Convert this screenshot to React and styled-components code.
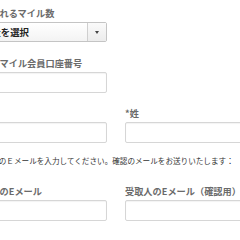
import React from 'react'
import styled, { createGlobalStyle } from 'styled-components'

const Global = createGlobalStyle`
  html, body {
    margin: 0;
    padding: 0;
    background: #fff;
    overflow: hidden;
  }
  body {
    font-family: "Noto Sans CJK JP", "Liberation Sans", sans-serif;
  }
`

const Page = styled.div`
  width: 290px;
  margin-left: -28px;
  padding-top: 7px;
`

const Field = styled.div`
  width: 135px;
  margin-bottom: ${p => p.$mb || 0}px;
`

const Row = styled.div`
  display: grid;
  grid-template-columns: 135px 135px;
  column-gap: 18px;
  margin-bottom: ${p => p.$mb || 0}px;
`

const Label = styled.div`
  font-size: 9.2px;
  line-height: 12px;
  height: 12px;
  font-weight: 600;
  color: #6a6a6a;
  white-space: nowrap;
  margin-bottom: 3px;
`

const Input = styled.div`
  height: 21px;
  box-sizing: border-box;
  border: 1px solid #d6d6d6;
  border-radius: 2px;
  background: #fff;
  box-shadow: inset 0 1px 1px rgba(0, 0, 0, 0.05);
`

const Select = styled.div`
  display: flex;
  height: 20px;
  box-sizing: border-box;
  border: 1px solid #c4c4c4;
  border-radius: 2px;
  background: linear-gradient(#ffffff, #f3f3f3);
  margin-top: 1px;
`

const SelectText = styled.div`
  flex: 1;
  padding-left: 9px;
  font-size: 9.4px;
  line-height: 18px;
  font-weight: 700;
  color: #222;
  white-space: nowrap;
  overflow: hidden;
`

const SelectButton = styled.div`
  width: 18px;
  border-left: 1px solid #cfcfcf;
  background: linear-gradient(#fafafa, #ececec);
  display: flex;
  align-items: center;
  justify-content: center;
`

const Arrow = styled.span`
  width: 0;
  height: 0;
  border-left: 2.5px solid transparent;
  border-right: 2.5px solid transparent;
  border-top: 3px solid #444;
`

const Note = styled.p`
  margin: 0 0 18px 4px;
  font-size: 7.6px;
  line-height: 12px;
  color: #333;
  white-space: nowrap;
`

export default function App() {
  return (
    <>
      <Global />
      <Page>
        <Field $mb={15}>
          <Label>受け取れるマイル数</Label>
          <Select>
            <SelectText>数量を選択</SelectText>
            <SelectButton><Arrow /></SelectButton>
          </Select>
        </Field>
        <Field $mb={14}>
          <Label>提携先マイル会員口座番号</Label>
          <Input />
        </Field>
        <Row $mb={12}>
          <div>
            <Label>*名</Label>
            <Input />
          </div>
          <div>
            <Label>*姓</Label>
            <Input />
          </div>
        </Row>
        <Note>受取人のＥメールを入力してください。確認のメールをお送りいたします：</Note>
        <Row>
          <div>
            <Label>受取人のEメール</Label>
            <Input />
          </div>
          <div>
            <Label>受取人のEメール（確認用）</Label>
            <Input />
          </div>
        </Row>
      </Page>
    </>
  )
}
